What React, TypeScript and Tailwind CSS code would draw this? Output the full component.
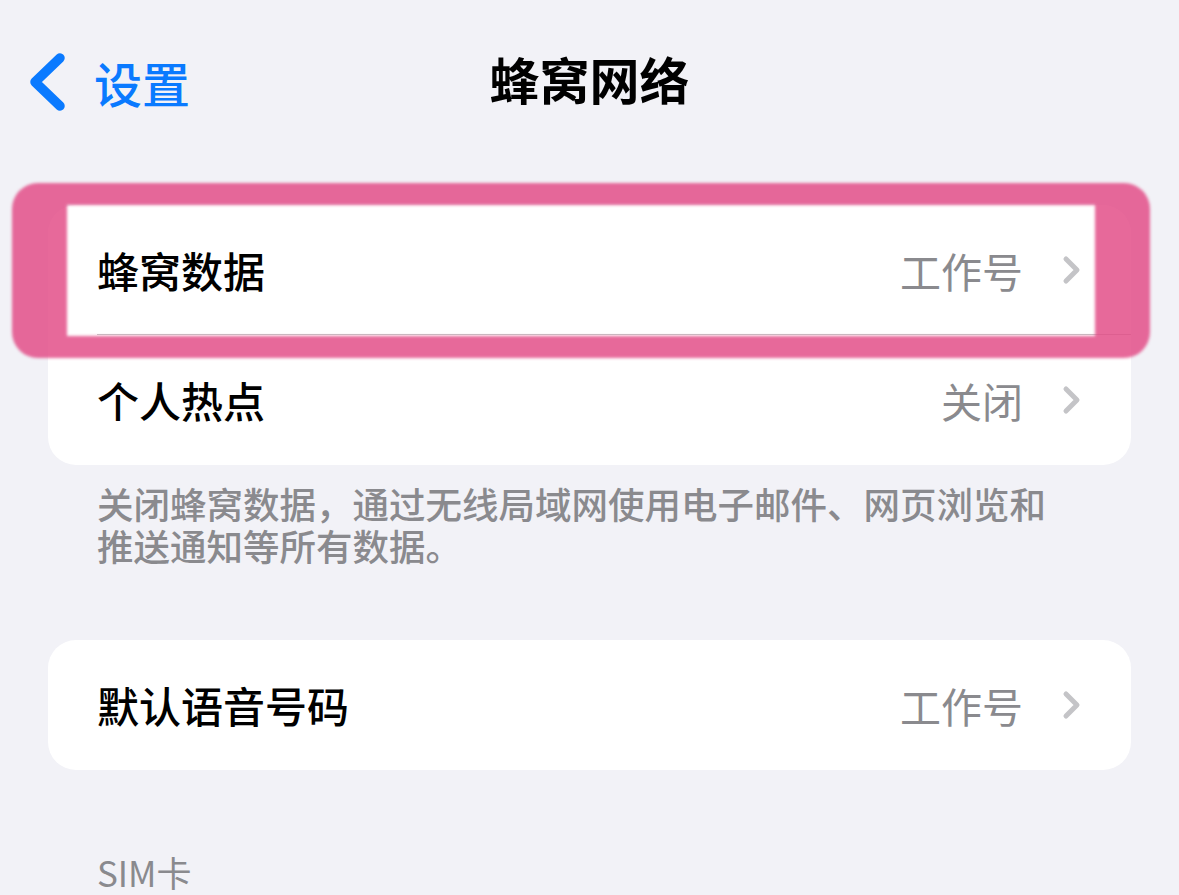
import React from 'react'

const font = { fontFamily: '"Noto Sans CJK SC", "Noto Sans", sans-serif' }

const Chevron = () => (
  <svg width="22" height="32" viewBox="0 0 22 32" fill="none">
    <path d="M5 5 L16 16 L5 27" stroke="#c4c4c7" strokeWidth="5" strokeLinecap="round" strokeLinejoin="round" />
  </svg>
)

const Row = ({ label, value, divider }: { label: string; value: string; divider?: boolean }) => (
  <div className="relative flex items-center h-[130px] pl-[49px] pr-[48px]">
    <span className="text-[42px] font-medium text-black leading-none">{label}</span>
    <div className="ml-auto flex items-center gap-[38px]">
      <span className="text-[41px] text-[#8a8a8e] leading-none">{value}</span>
      <Chevron />
    </div>
    {divider && <div className="absolute bottom-0 left-[49px] right-0 h-px bg-[#c6c6c8]" />}
  </div>
)

const App = () => {
  return (
    <div className="w-[1179px] h-[895px] overflow-hidden bg-[#f2f2f7]" style={font}>
      <div className="grid grid-cols-[1fr_auto_1fr] items-center h-[156px]">
        <div className="flex items-center pl-[28px] gap-[28px] pt-[8px]">
          <svg width="38" height="58" viewBox="0 0 38 58" fill="none">
            <path d="M32 5 L7 29 L32 53" stroke="#0a7aff" strokeWidth="9.5" strokeLinecap="round" strokeLinejoin="round" />
          </svg>
          <span className="text-[48px] font-medium text-[#0a7aff] leading-none">设置</span>
        </div>
        <h1 className="text-[50px] font-bold text-black leading-none">蜂窝网络</h1>
        <div />
      </div>

      <div className="relative mx-[48px] mt-[49px]">
        <div className="bg-white rounded-[28px] overflow-hidden">
          <Row label="蜂窝数据" value="工作号" divider />
          <Row label="个人热点" value="关闭" />
        </div>
        {/* highlighter mark */}
        <div className="absolute left-[-36px] top-[-22px] w-[1138px] h-[175px] rounded-[26px] border-y-[22px] border-x-[55px] border-[rgba(226,72,132,0.82)] blur-[1.5px]" />
      </div>

      <p className="ml-[97px] mt-[18px] mr-[100px] text-[36.5px] leading-[42px] text-[#8a8a8e] font-medium">
        关闭蜂窝数据，通过无线局域网使用电子邮件、网页浏览和推送通知等所有数据。
      </p>

      <div className="mx-[48px] mt-[73px] bg-white rounded-[28px] overflow-hidden">
        <Row label="默认语音号码" value="工作号" />
      </div>

      <div className="pl-[97px] mt-[84px] text-[35px] leading-none text-[#8a8a8e]">SIM卡</div>
    </div>
  )
}

export default App
